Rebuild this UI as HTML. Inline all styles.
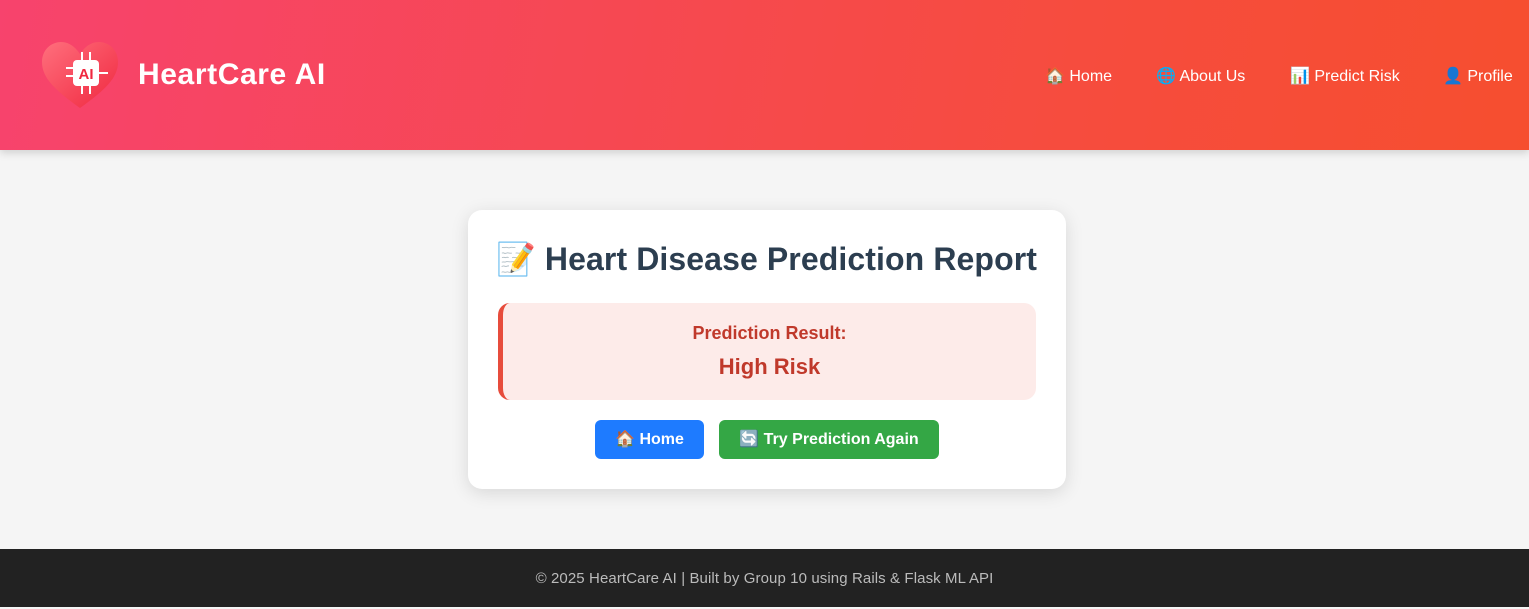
<!DOCTYPE html>
<html><head><meta charset="utf-8"><style>
*{margin:0;padding:0;box-sizing:border-box}
body{width:1529px;height:607px;overflow:hidden;background:#f5f5f5;font-family:"Liberation Sans","DejaVu Sans",sans-serif;position:relative}
header{position:absolute;left:0;top:0;width:1529px;height:150px;background:linear-gradient(100deg,#f7436d 0%,#f64c3e 70%,#f64e2f 100%);box-shadow:0 3px 8px rgba(0,0,0,.15)}
.brand{position:absolute;left:138px;top:58px;font-size:30px;font-weight:bold;color:#fff;letter-spacing:0.6px}
nav a{position:absolute;top:66px;font-size:16px;color:#fff;text-decoration:none}
.card{position:absolute;left:468px;top:210px;width:598px;height:279px;background:#fff;border-radius:14px;box-shadow:0 4px 18px rgba(0,0,0,.12)}
h1{position:absolute;left:2px;width:100%;top:240px;text-align:center;font-size:32px;color:#2c3e50;letter-spacing:0.1px}
.res{position:absolute;left:498px;top:303px;width:538px;height:97px;background:#fdebe9;border-left:5px solid #e74c3c;border-radius:12px;text-align:center;color:#c0392b;font-weight:bold}
.btn{position:absolute;top:420px;height:39px;border-radius:6px;color:#fff;font-weight:bold;font-size:16px;line-height:40px;text-align:center}
footer{position:absolute;left:0;top:549px;width:1529px;height:58px;background:#222;color:#bbb;font-size:15px;text-align:center;line-height:60px;letter-spacing:0.1px}
</style></head><body>
<header>
<svg style="position:absolute;left:40px;top:40px" width="80" height="70" viewBox="0 0 80 70">
<defs><linearGradient id="g" x1="0" y1="0" x2="1" y2="1"><stop offset="0" stop-color="#ff6f7d"/><stop offset="1" stop-color="#f0283f"/></linearGradient></defs>
<path d="M40 68 C15 50 2 38 2 22 C2 10 11 2 21 2 C30 2 36 8 40 14 C44 8 50 2 59 2 C69 2 78 10 78 22 C78 38 65 50 40 68Z" fill="url(#g)"/>
<g stroke="#fff" stroke-width="2">
<line x1="42" y1="12" x2="42" y2="22"/><line x1="50" y1="12" x2="50" y2="22"/>
<line x1="42" y1="44" x2="42" y2="54"/><line x1="50" y1="44" x2="50" y2="54"/>
<line x1="26" y1="28" x2="34" y2="28"/><line x1="26" y1="36" x2="34" y2="36"/>
<line x1="58" y1="33" x2="68" y2="33"/>
</g>
<rect x="33" y="20" width="26" height="26" rx="4" fill="#fff"/>
<text x="46" y="39" font-size="15" font-weight="bold" fill="#f0283f" text-anchor="middle" font-family="Liberation Sans">AI</text>
</svg>
<div class="brand">HeartCare AI</div>
<nav><a style="left:1045px">🏠 Home</a><a style="left:1156px">🌐 About Us</a><a style="left:1290px">📊 Predict Risk</a><a style="left:1443px">👤 Profile</a></nav>
</header>
<div class="card"></div>
<h1>📝 Heart Disease Prediction Report</h1>
<div class="res"><div style="margin-top:20px;font-size:18px">Prediction Result:</div><div style="margin-top:10px;font-size:22px">High Risk</div></div>
<div class="btn" style="left:595px;width:109px;background:#1e7bff">🏠 Home</div>
<div class="btn" style="left:719px;width:220px;background:#34a745">🔄 Try Prediction Again</div>
<footer>© 2025 HeartCare AI | Built by Group 10 using Rails &amp; Flask ML API</footer>
</body></html>
